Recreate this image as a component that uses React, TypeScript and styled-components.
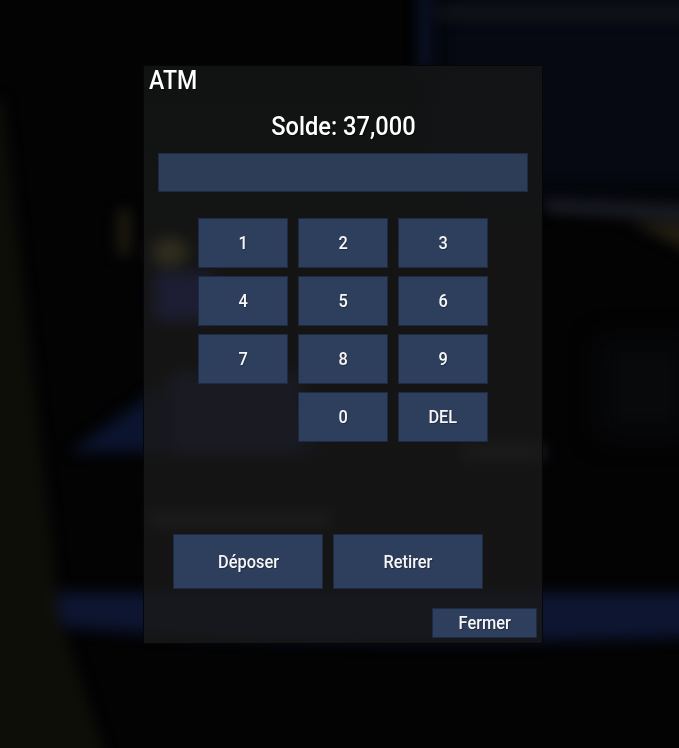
import React from 'react';
import styled, { createGlobalStyle } from 'styled-components';

const GlobalStyle = createGlobalStyle`
  html, body {
    margin: 0;
    padding: 0;
    background: #030304;
  }
`;

const Page = styled.div`
  position: relative;
  width: 679px;
  height: 748px;
  overflow: hidden;
  box-sizing: border-box;
  padding: 65px 0 0 143px;
  font-family: Roboto, sans-serif;
  color: #fff;
`;

const Scene = styled.svg`
  position: absolute;
  left: 0;
  top: 0;
`;

const Panel = styled.div`
  position: relative;
  box-sizing: border-box;
  width: 400px;
  height: 579px;
  background: linear-gradient(rgba(20, 22, 22, 0.8), rgba(25, 25, 25, 0.8) 40%);
  border: 1px solid #050608;
  display: flex;
  flex-direction: column;
  padding: 0 5px 5px 14px;
`;

const Label = styled.span`
  display: inline-block;
  transform: scaleX(0.91);
`;

const Title = styled.div`
  font-size: 26px;
  line-height: 28px;
  font-weight: 500;
  margin: 0 0 0 -9px;
  height: 28px;
  text-shadow: 1px 1px 1px rgba(0, 0, 0, 0.6);

  ${Label} {
    transform-origin: left center;
    transform: scaleX(0.89);
  }
`;

const Balance = styled.div`
  font-size: 26px;
  line-height: 30px;
  font-weight: 500;
  text-align: center;
  width: 370px;
  margin-top: 17px;
  text-shadow: 1px 1px 1px rgba(0, 0, 0, 0.6);
`;

const AmountField = styled.div`
  box-sizing: border-box;
  width: 370px;
  height: 40px;
  margin-top: 12px;
  background: #2d3d58;
  border: 1px solid #1d2a41;
`;

const Keypad = styled.div`
  display: grid;
  grid-template-columns: repeat(3, 90px);
  grid-auto-rows: 50px;
  gap: 8px 10px;
  margin: 26px 0 0 40px;
`;

const Button = styled.button<{ $col?: number }>`
  box-sizing: border-box;
  margin: 0;
  padding: 0 0 2px;
  background: #2e3f5e;
  border: 1px solid #1d2a41;
  border-radius: 0;
  color: #f6f6f6;
  font-family: Roboto, sans-serif;
  font-size: 18px;
  font-weight: 500;
  text-shadow: 1px 1px 1px rgba(0, 0, 0, 0.3);
  ${({ $col }) => $col && `grid-column: ${$col};`}
`;

const Actions = styled.div`
  display: grid;
  grid-template-columns: repeat(2, 150px);
  grid-auto-rows: 55px;
  gap: 10px;
  margin: 92px 0 0 15px;
`;

const ActionButton = styled(Button)`
  padding: 0;
`;

const Footer = styled.div`
  display: flex;
  justify-content: flex-end;
  margin-top: 19px;
`;

const CloseButton = styled(Button)`
  width: 105px;
  height: 30px;
`;

const keys = ['1', '2', '3', '4', '5', '6', '7', '8', '9'];

export default function App() {
  return (
    <Page>
      <GlobalStyle />
      <Scene width="679" height="748" viewBox="0 0 679 748">
        <defs>
          <filter id="soft" filterUnits="userSpaceOnUse" x="-80" y="-80" width="840" height="910" colorInterpolationFilters="sRGB">
            <feGaussianBlur stdDeviation="7" />
          </filter>
          <filter id="softer" filterUnits="userSpaceOnUse" x="-80" y="-80" width="840" height="910" colorInterpolationFilters="sRGB">
            <feGaussianBlur stdDeviation="14" />
          </filter>
        </defs>
        <g filter="url(#softer)">
          <rect x="436" y="-30" width="300" height="222" fill="#060912" />
          <rect x="600" y="340" width="90" height="95" fill="#08090b" />
        </g>
        <g filter="url(#soft)">
          <path d="M170 380L70 452H320L300 380Z" fill="#0b142e" />
          <rect x="172" y="372" width="130" height="82" fill="#1c1e48" />
          <path d="M50 592H720V636Q340 652 50 626Z" fill="#0d1530" />
          <path d="M-40 100H2L44 480L60 620L116 790H-40Z" fill="#0e0e09" />
          <rect x="418" y="-20" width="14" height="90" fill="#0a1226" />
          <rect x="438" y="8" width="260" height="10" fill="#15181b" />
          <path d="M545 199L700 206V222L545 212Z" fill="#1b1e27" />
          <path d="M630 222L700 224V256Z" fill="#241f11" />
          <rect x="118" y="210" width="12" height="45" fill="#211e10" />
          <ellipse cx="170" cy="252" rx="18" ry="15" fill="#8a7c30" />
          <rect x="155" y="272" width="58" height="48" fill="#2a2e9a" />
          <rect x="150" y="513" width="180" height="12" fill="#2a2c32" />
          <rect x="462" y="446" width="82" height="12" fill="#282a30" />
        </g>
      </Scene>
      <Panel>
        <Title><Label>ATM</Label></Title>
        <Balance><Label>Solde: 37,000</Label></Balance>
        <AmountField />
        <Keypad>
          {keys.map(key => (
            <Button key={key}><Label>{key}</Label></Button>
          ))}
          <Button $col={2}><Label>0</Label></Button>
          <Button><Label>DEL</Label></Button>
        </Keypad>
        <Actions>
          <ActionButton><Label>Déposer</Label></ActionButton>
          <ActionButton><Label>Retirer</Label></ActionButton>
        </Actions>
        <Footer>
          <CloseButton><Label>Fermer</Label></CloseButton>
        </Footer>
      </Panel>
    </Page>
  );
}
